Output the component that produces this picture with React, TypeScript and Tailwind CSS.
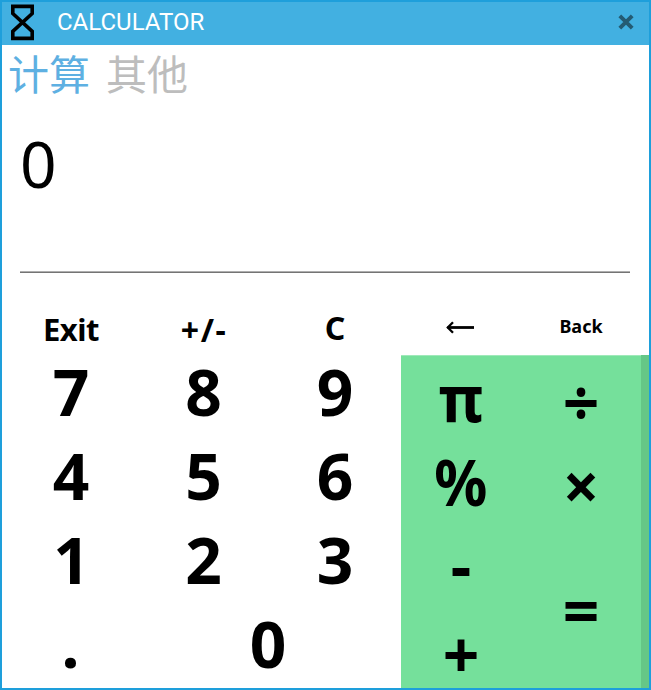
import React from 'react';

type KeyProps = { label: string; className?: string; shift?: string };

function Key({ label, className = 'h-[84px] text-[64px] leading-[84px]', shift = '' }: KeyProps) {
  return (
    <button className={`flex justify-center overflow-visible whitespace-nowrap font-bold ${className}`}>
      <span className={shift}>{label}</span>
    </button>
  );
}

function TitleBar() {
  return (
    <header className="flex h-[43px] shrink-0 items-start bg-[#42b0e1] text-white">
      <svg className="mt-[1px] ml-[8px] shrink-0" width="25" height="38" viewBox="0 0 25 38" fill="none" stroke="#000" strokeWidth="3.6">
        <path d="M2.8 3.4H22.2V10.5L2.8 28.3V35.4H22.2V28.3L2.8 10.5Z" />
      </svg>
      <h1 className="ml-[22px] font-[Roboto,sans-serif] text-[24px] leading-[41px]">CALCULATOR</h1>
      <button className="mt-[12px] mr-[15px] ml-auto" aria-label="Close">
        <svg width="16" height="16" viewBox="0 0 16 16" stroke="#245b73" strokeWidth="3.9">
          <path d="M1.8 1.8L14.2 14.2M14.2 1.8L1.8 14.2" />
        </svg>
      </button>
    </header>
  );
}

export default function App() {
  return (
    <main className="flex h-[690px] w-[651px] flex-col overflow-hidden border-2 border-[#1e9fdb] bg-white font-['Noto_Sans','Noto_Sans_CJK_SC',sans-serif] text-black">
      <TitleBar />
      <nav className="flex h-[65px] shrink-0 gap-[16px] pl-[6px] font-['Noto_Sans_CJK_SC',sans-serif] text-[41px] leading-[55px] font-normal">
        <button className="flex text-[#5eb0e2]">计算</button>
        <button className="flex text-[#bdbdbd]">其他</button>
      </nav>
      <section className="mr-[19px] ml-[18px] h-[163px] shrink-0 border-b border-[#747474] text-[64px] leading-[108px] shadow-[inset_0_-1px_0_#aeaeae]">0</section>
      <div className="flex h-[415px] shrink-0">
        <section className="grid w-[399px] shrink-0 grid-cols-[136px_131px_132px] grid-rows-[77px_84px_84px_84px_84px]">
          <Key label="Exit" className="h-[77px] pt-[34px] text-[31px] leading-[44px] tracking-[-0.5px]" shift="pl-[2px]" />
          <Key label="+/-" className="h-[77px] pt-[35px] text-[32px] leading-[44px] tracking-[1.5px]" shift="pl-[1px]" />
          <Key label="C" className="h-[77px] pt-[33px] text-[32px] leading-[44px]" />
          <Key label="7" shift="pl-[2px]" />
          <Key label="8" />
          <Key label="9" />
          <Key label="4" shift="pl-[2px]" />
          <Key label="5" />
          <Key label="6" />
          <Key label="1" shift="pl-[3px]" />
          <Key label="2" />
          <Key label="3" />
          <Key label="." shift="pl-[1px]" />
          <Key label="0" className="col-span-2 h-[84px] pr-[3px] text-[64px] leading-[84px]" />
        </section>
        <section className="flex w-[248px] shrink-0 flex-col">
          <div className="grid h-[82px] shrink-0 grid-cols-[120px_120px]">
            <button className="flex items-start justify-center pt-[47px] pr-[1px]" aria-label="Backspace">
              <svg width="29" height="14" viewBox="0 0 29 14" fill="none" stroke="#000">
                <path d="M1.5 7.5H28" strokeWidth="2.8" />
                <path d="M7 2.2L1.8 7.5L7 12.8" strokeWidth="2.3" />
              </svg>
            </button>
            <Key label="Back" className="pt-[40px] text-[18px] leading-[26px]" />
          </div>
          <div className="flex h-[333px] shrink-0 bg-[#75e09b] shadow-[inset_0_1px_0_#9fe9b9]">
            <div className="flex w-[120px] flex-col">
              <Key label="π" className="h-[84px] pt-[1px] text-[64px] leading-[84px]" shift="scale-x-[0.94]" />
              <Key label="%" className="h-[84px] pt-[1px] text-[64px] leading-[84px]" shift="scale-x-[0.92]" />
              <Key label="-" className="h-[84px] text-[64px] leading-[84px]" />
              <Key label="+" className="h-[81px] pt-[5px] text-[64px] leading-[84px]" />
            </div>
            <div className="flex w-[120px] flex-col">
              <Key label="÷" className="h-[84px] pt-[5px] text-[64px] leading-[84px]" />
              <Key label="×" className="h-[84px] pt-[5px] text-[64px] leading-[84px]" />
              <Key label="=" className="h-[165px] pt-[3px] text-[64px] leading-[168px]" />
            </div>
            <div className="w-[8px] bg-[#65c787]" />
          </div>
        </section>
      </div>
    </main>
  );
}
